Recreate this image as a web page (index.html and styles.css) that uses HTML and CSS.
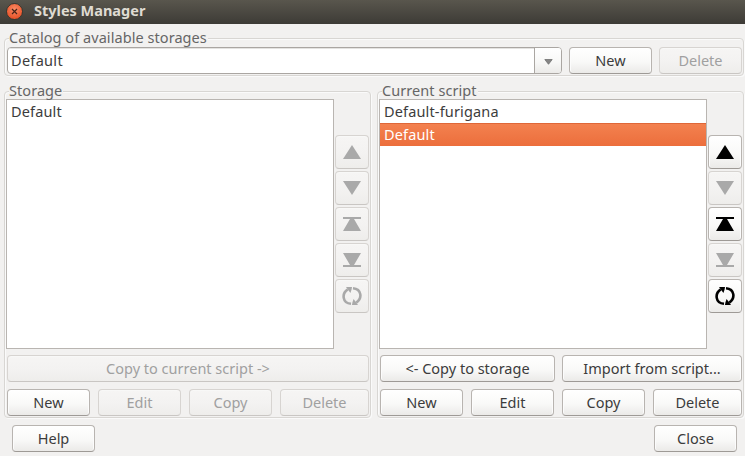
FILE: index.html
```html
<!DOCTYPE html>
<html lang="en">
<head>
<meta charset="utf-8">
<title>Styles Manager</title>
<link rel="stylesheet" href="styles.css">
</head>
<body>
<svg class="defs" aria-hidden="true">
  <symbol id="up" viewBox="0 0 20 20"><path d="M10 3 19 17H1z"/></symbol>
  <symbol id="down" viewBox="0 0 20 20"><path d="M1 3H19L10 17z"/></symbol>
  <symbol id="top" viewBox="0 0 20 20"><path d="M1 3H19V5H12L19 17H1L8 5H1z"/></symbol>
  <symbol id="bottom" viewBox="0 0 20 20"><path d="M1 3H19L12 15H19V17H1V15H8z"/></symbol>
  <symbol id="sort" viewBox="0 0 20 20"><path class="arc" d="M9 17.8C.2 17 -.5 7.5 5.8 3.4M11 2.2C19.8 3 20.5 12.5 14.2 16.6"/><path d="M4 1H10L9.6 3.6 8.4 7zM16 19H10L10.4 16.4 11.6 13z"/></symbol>
</svg>
<header class="titlebar">
  <span class="close"><svg viewBox="0 0 15 15"><path d="M5 5l5 5M10 5l-5 5"/></svg></span>
  <h1>Styles Manager</h1>
</header>
<main>
  <section class="group catalog">
    <h2>Catalog of available storages</h2>
    <div class="combo"><span class="value">Default</span><span class="drop"><svg viewBox="0 0 9 6"><path d="M.8.5H8.2L4.5 5.3z"/></svg></span></div>
    <button>New</button>
    <button disabled>Delete</button>
  </section>
  <div class="columns">
    <section class="group pane">
      <h2>Storage</h2>
      <div class="listing">
        <ul><li>Default</li></ul>
        <div class="tools">
          <button disabled><svg><use href="#up"/></svg></button>
          <button disabled><svg><use href="#down"/></svg></button>
          <button disabled><svg><use href="#top"/></svg></button>
          <button disabled><svg><use href="#bottom"/></svg></button>
          <button disabled><svg><use href="#sort"/></svg></button>
        </div>
      </div>
      <div class="transfer"><button class="grow" disabled>Copy to current script -&gt;</button></div>
      <div class="actions">
        <button>New</button><button disabled>Edit</button><button disabled>Copy</button><button class="grow" disabled>Delete</button>
      </div>
    </section>
    <section class="group pane">
      <h2>Current script</h2>
      <div class="listing">
        <ul><li>Default-furigana</li><li class="selected">Default</li></ul>
        <div class="tools">
          <button><svg><use href="#up"/></svg></button>
          <button disabled><svg><use href="#down"/></svg></button>
          <button><svg><use href="#top"/></svg></button>
          <button disabled><svg><use href="#bottom"/></svg></button>
          <button><svg><use href="#sort"/></svg></button>
        </div>
      </div>
      <div class="transfer"><button class="to-storage">&lt;- Copy to storage</button><button class="grow">Import from script...</button></div>
      <div class="actions">
        <button>New</button><button>Edit</button><button>Copy</button><button class="grow">Delete</button>
      </div>
    </section>
  </div>
</main>
<footer><button>Help</button><button>Close</button></footer>
</body>
</html>
```

FILE: styles.css
```css
* { box-sizing: border-box; }
body {
  margin: 0; width: 745px; height: 456px; overflow: hidden;
  background: #f2f1f0; color: #3c3c3c;
  font: 14.5px/20px "Noto Sans", "Open Sans", sans-serif;
}
.defs { display: none; }
h1, h2, ul { margin: 0; padding: 0; font-size: inherit; }
.titlebar {
  height: 24px; display: flex; align-items: center; padding: 0 0 2px 6px; gap: 11px;
  background: linear-gradient(#59564d, #3d3b36); color: #dfdbd2;
}
.titlebar h1 { font-size: 14.5px; font-weight: 700; margin-top: -2px; }
.close {
  width: 17px; height: 17px; border-radius: 50%; display: flex;
  background: radial-gradient(circle at 50% 35%, #f98b65, #e9542a 75%);
  border: 1px solid #39372f;
}
.close svg { width: 15px; height: 15px; stroke: #4a2418; stroke-width: 1.2; fill: none; }
main { padding: 14px 1px 0 4px; }
.group {
  position: relative; border: 1px solid #d8d6d3; border-radius: 4px;
  box-shadow: inset 1px 1px #fafafa, 1px 1px #fafafa;
}
.group h2 {
  position: absolute; left: 4px; top: -12px; padding: 0 1px 0 0;
  background: linear-gradient(#f2f1f0 0 18px, transparent 18px);
  color: #666; font-weight: 400; white-space: nowrap; letter-spacing: .06px;
}
.catalog { height: 38px; display: flex; gap: 7px; padding: 8px 1px 0 2px; }
button {
  width: 83px; height: 27px; padding: 0 0 1px; margin: 0; flex: none;
  border: 1px solid #b8b4b0; border-bottom-color: #9e9a96; border-radius: 4px;
  background: linear-gradient(#fff, #f9f9f8 55%, #ebeae8);
  box-shadow: inset 0 1px #fff, inset 1px 0 #fcfcfc, inset -1px 0 #fcfcfc;
  font: inherit; color: #3c3c3c; white-space: nowrap;
}
button:disabled {
  color: #a0a0a0; border-color: #d7d4d1; border-bottom-color: #c9c6c3;
  background: linear-gradient(#f6f5f4, #f3f2f1 55%, #eeedeb);
  box-shadow: inset 0 1px #f8f8f7;
}
.combo {
  width: 555px; height: 27px; display: flex; overflow: hidden;
  border: 1px solid #aaa6a2; border-radius: 4px; background: #fff;
}
.value { flex: 1; padding: 2px 3px; box-shadow: inset 0 1px #e4e3e1; letter-spacing: .3px; }
.drop {
  width: 27px; border-left: 1px solid #aaa6a2; display: flex; align-items: center; justify-content: center;
  background: linear-gradient(#fff, #f8f8f7 55%, #ebeae8); padding-top: 2px;
}
.drop svg { width: 9px; height: 6px; fill: #858585; stroke: #666; stroke-width: .7; }
.columns { display: grid; grid-template-columns: 367px 367px; gap: 6px; padding-top: 15px; }
.pane { height: 327px; padding: 7px 1px 0; }
.listing { height: 250px; display: flex; gap: 1px; }
.listing ul { width: 328px; border: 1px solid #b9b5b1; background: #fff; list-style: none; }
li { height: 23px; padding: 1px 4px; }
.selected { color: #fff; background: linear-gradient(#f3814f, #ec6e3c); border-top: 1px solid #df6738; padding-top: 0; }
.listing li { letter-spacing: .15px; }
.tools { display: flex; flex-direction: column; gap: 2px; padding-top: 36px; }
.tools button { width: 34px; height: 34px; padding: 0; display: flex; align-items: center; justify-content: center; color: #000; }
.tools button:disabled { color: #a9a9a9; }
.tools svg { width: 20px; height: 20px; fill: currentColor; }
.arc { fill: none; stroke: currentColor; stroke-width: 2.6; }
.transfer, .actions { display: flex; margin: 6px 0 0 1px; }
.transfer { gap: 7px; }
.transfer .to-storage { width: 175px; }
.actions { gap: 8px; margin-top: 7px; }
.grow { flex: 1; }
footer { display: flex; justify-content: space-between; padding: 7px 8px 0 12px; }
```
